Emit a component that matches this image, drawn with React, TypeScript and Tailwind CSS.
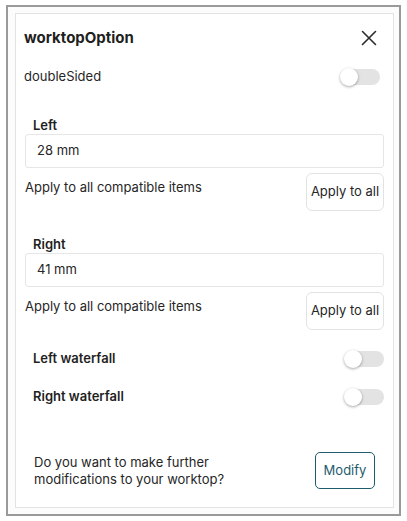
const font = { fontFamily: "Inter, 'Noto Sans', sans-serif" };

const Toggle = () => (
  <div className="relative h-[20px] w-[40px] shrink-0">
    <div className="absolute left-[4px] right-0 top-[2px] h-[16px] rounded-full bg-[#e3e3e3]" />
    <div className="absolute left-0 top-[1px] h-[18px] w-[18px] rounded-full bg-white shadow-[0_1px_3px_rgba(0,0,0,0.35)]" />
  </div>
);

const SizeField = ({ label, value }: { label: string; value: string }) => (
  <div>
    <div className="pl-[8px] text-[13px] font-semibold leading-[16px] text-[#1f1f1f]">
      {label}
    </div>
    <div className="mt-[1px] flex h-[34px] items-center rounded-[3px] border border-[#e6e6e6] pl-[11px] text-[13px] text-[#262626]">
      {value}
    </div>
    <div className="mt-[5px] flex items-start justify-between">
      <div className="mt-[6px] text-[13px] leading-[16px] text-[#262626]">
        Apply to all compatible items
      </div>
      <button className="h-[38px] w-[78px] rounded-[6px] border border-[#e3e3e3] bg-white text-[13px] text-[#262626]">
        Apply to all
      </button>
    </div>
  </div>
);

export default function App() {
  return (
    <div className="h-[521px] w-[407px] bg-white pl-[6px] pt-[5px]" style={font}>
      <div className="h-[511px] w-[395px] border-2 border-[#9a9a9a] bg-[#fcfcfc] pl-[7px] pt-[6px]">
        <div className="h-[495px] w-[379px] border border-[#e3e3e3] bg-white">
          <div className="mt-[13px] flex h-[21px] items-center justify-between pl-[8px] pr-[16px]">
            <h2 className="text-[15px] font-bold leading-[21px] text-[#1f1f1f]">worktopOption</h2>
            <svg width="16" height="16" viewBox="0 0 16 16" className="text-[#2b2b2b]">
              <path d="M1.5 1.5l13 13M14.5 1.5l-13 13" stroke="currentColor" strokeWidth="1.6" strokeLinecap="round" />
            </svg>
          </div>
          <div className="mt-[19px] flex h-[20px] items-center justify-between pl-[8px] pr-[13px]">
            <span className="text-[13px] text-[#262626]">doubleSided</span>
            <Toggle />
          </div>
          <div className="px-[9px]">
            <div className="mt-[30px]">
              <SizeField label="Left" value="28 mm" />
            </div>
            <div className="mt-[25px]">
              <SizeField label="Right" value="41 mm" />
            </div>
            <div className="mt-[19px] flex h-[20px] items-center justify-between">
              <span className="pl-[8px] text-[13px] font-semibold text-[#1f1f1f]">Left waterfall</span>
              <Toggle />
            </div>
            <div className="mt-[18px] flex h-[20px] items-center justify-between">
              <span className="pl-[8px] text-[13px] font-semibold text-[#1f1f1f]">Right waterfall</span>
              <Toggle />
            </div>
            <div className="mt-[45px] flex items-center justify-between pl-[9px] pr-[9px]">
              <p className="text-[13px] leading-[17px] text-[#262626]">
                Do you want to make further
                <br />
                modifications to your worktop?
              </p>
              <button className="h-[37px] w-[60px] rounded-[5px] border-[1.5px] border-[#1e5b6d] bg-white text-[13px] text-[#1e5b6d]">
                Modify
              </button>
            </div>
          </div>
        </div>
      </div>
    </div>
  );
}
